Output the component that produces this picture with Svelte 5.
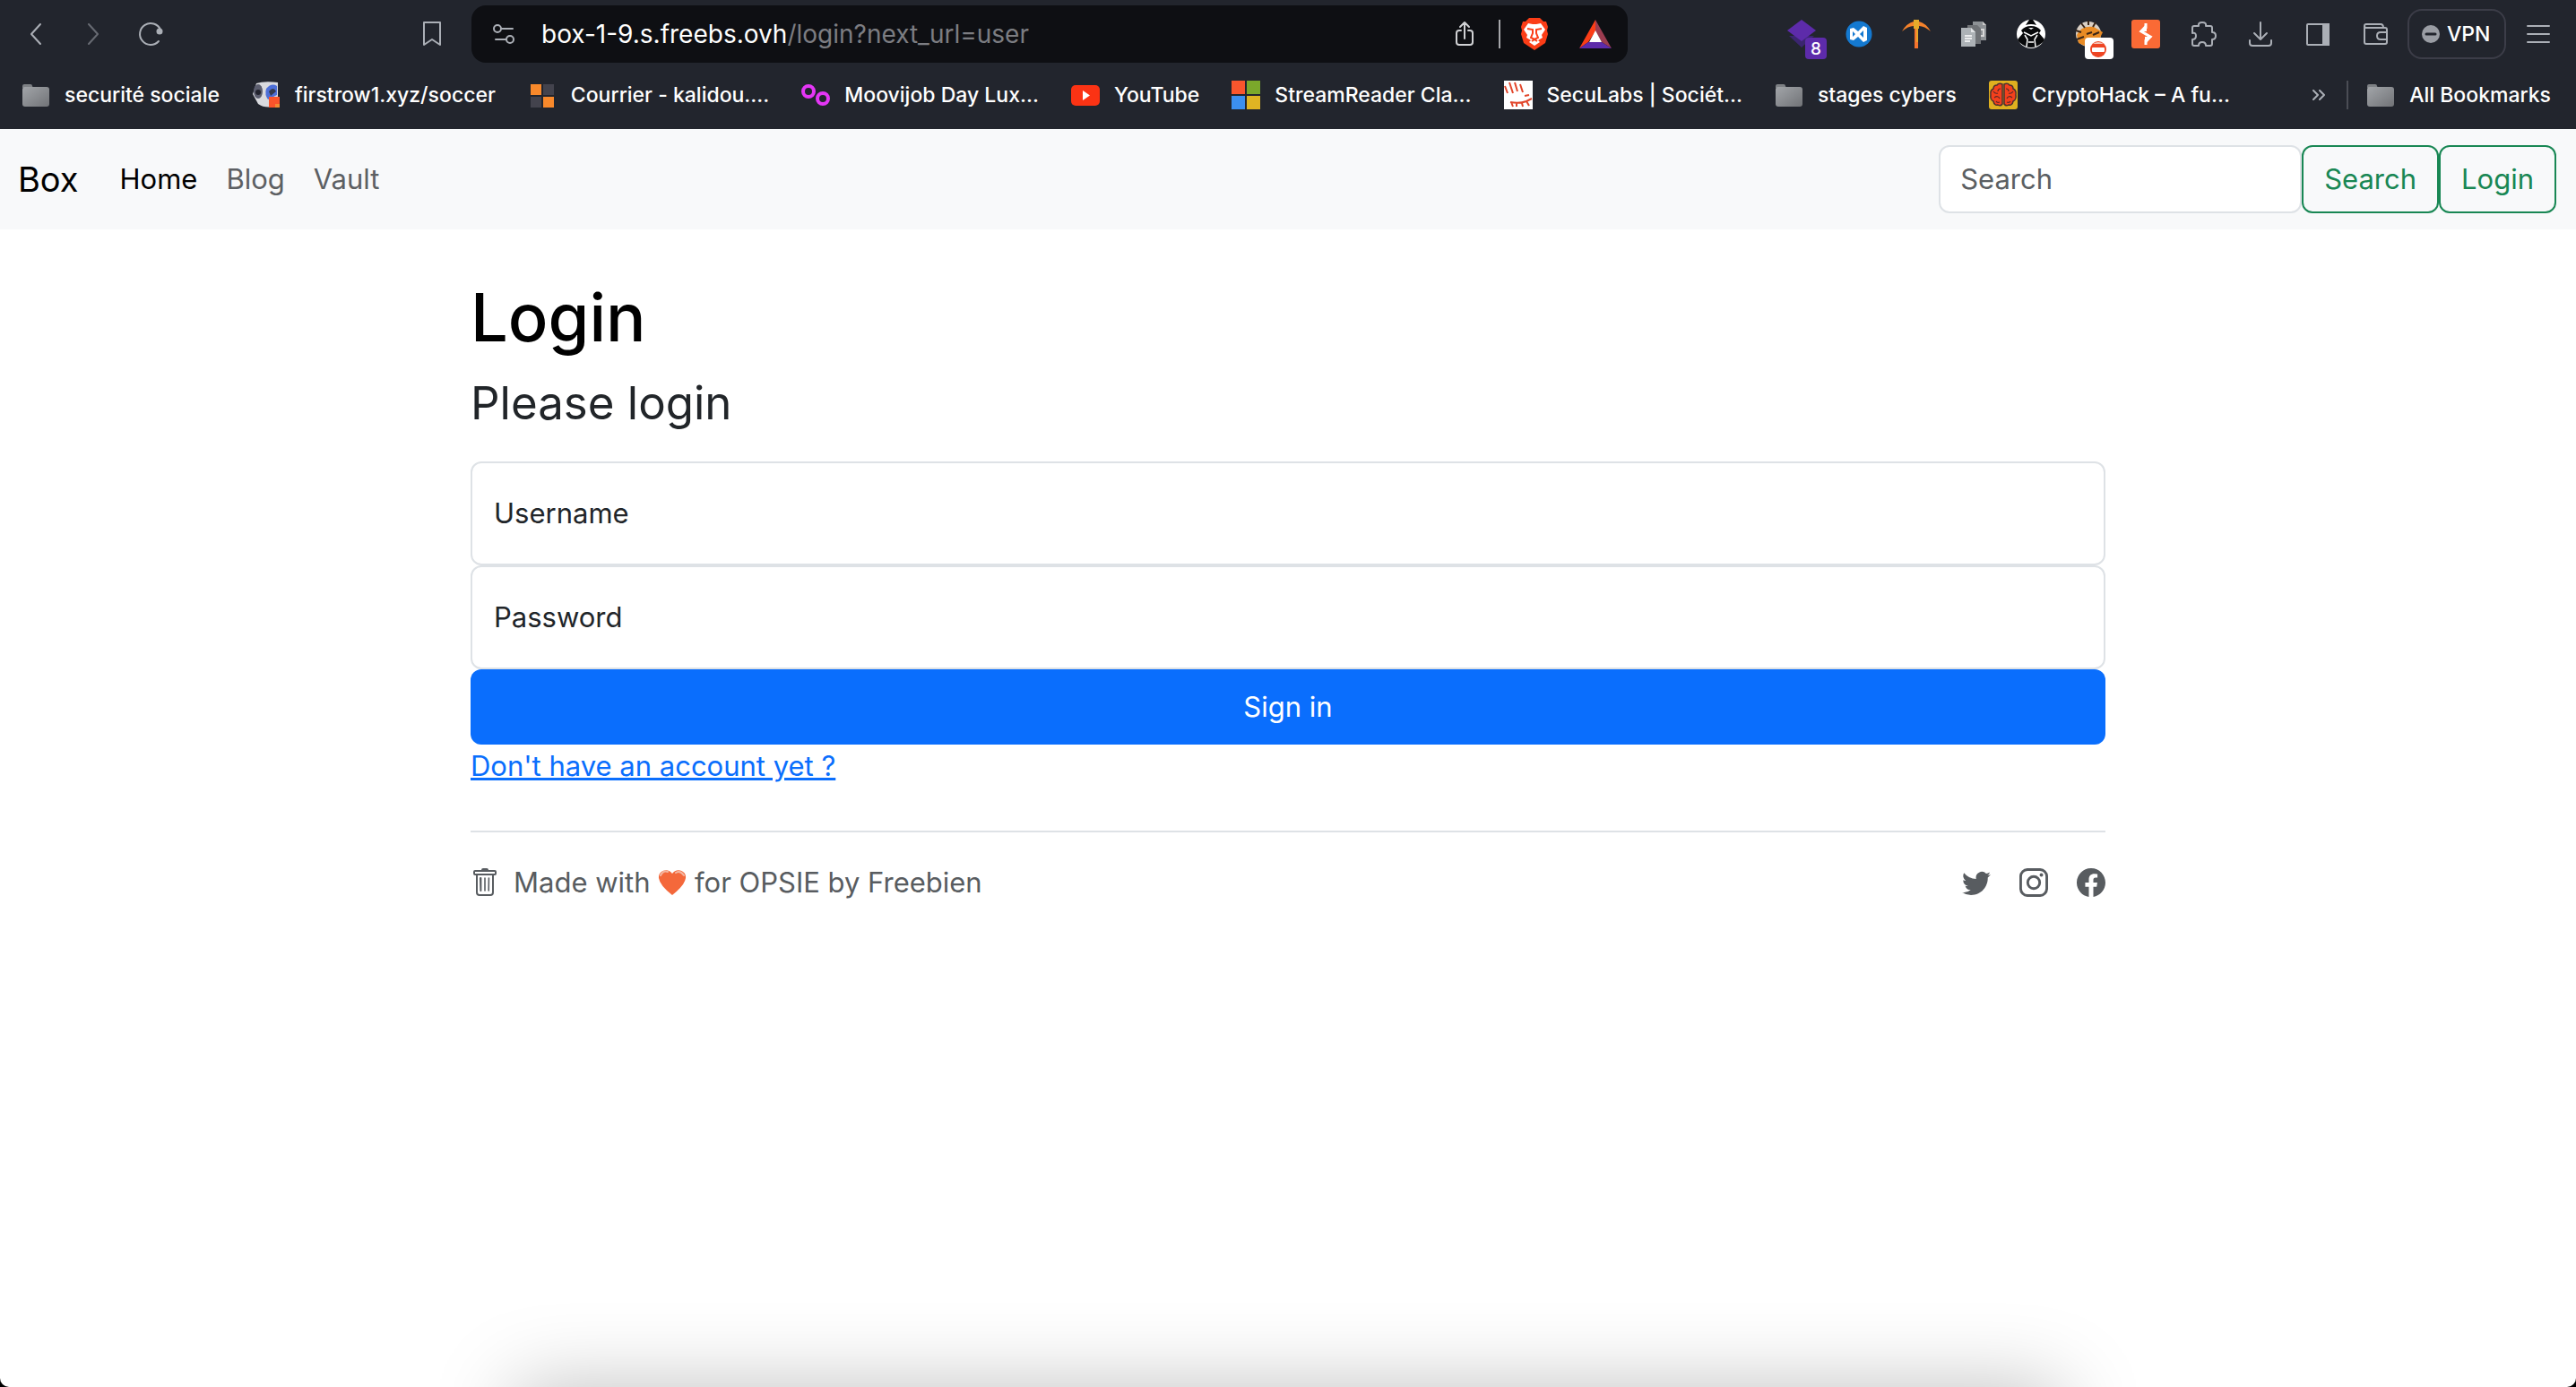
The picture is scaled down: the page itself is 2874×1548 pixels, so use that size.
<script>
  const bookmarks = [
    { icon: 'folder', label: 'securité sociale' },
    { icon: 'soccer', label: 'firstrow1.xyz/soccer' },
    { icon: 'courrier', label: 'Courrier - kalidou....' },
    { icon: 'moovi', label: 'Moovijob Day Lux...' },
    { icon: 'youtube', label: 'YouTube' },
    { icon: 'microsoft', label: 'StreamReader Cla...' },
    { icon: 'seculabs', label: 'SecuLabs | Sociét...' },
    { icon: 'folder', label: 'stages cybers' },
    { icon: 'crypto', label: 'CryptoHack – A fu...' }
  ];
  const extensions = [
    { icon: 'layers', label: 'Layers' },
    { icon: 'vscode', label: 'Code' },
    { icon: 'pickaxe', label: 'Pickaxe' },
    { icon: 'docs', label: 'Documents' },
    { icon: 'mask', label: 'Mask' },
    { icon: 'tiger', label: 'Tiger' },
    { icon: 'burp', label: 'Burp' },
    { icon: 'puzzle', label: 'Extensions' },
    { icon: 'download', label: 'Downloads' },
    { icon: 'sidebar', label: 'Sidebar' },
    { icon: 'wallet', label: 'Wallet' }
  ];
  let username = $state('');
  let password = $state('');
</script>

{#snippet icon(name)}
  <svg class="icon" viewBox="0 0 32 32" aria-hidden="true">
    {#if name === 'folder'}
      <defs><linearGradient id="fold" x1="0" y1="0" x2="1" y2="1"><stop offset="0" stop-color="#a2a5a9" /><stop offset="1" stop-color="#717377" /></linearGradient></defs>
      <path d="M1 8V6q0-2 2-2h7q2 0 2 2l1 2z" fill="#7d8084" />
      <rect x="1" y="7" width="30" height="22" rx="3" fill="url(#fold)" />
    {:else if name === 'soccer'}
      <path d="M5 3Q14 0 29 2v26Q15 32 7 26L1 15z" fill="#d9dade" />
      <ellipse cx="7" cy="12" rx="5" ry="8" fill="#5b5d6e" /><circle cx="7" cy="13" r="3" fill="#22232d" />
      <path d="M16 9Q22 2 28 6v10l-10 5q-4-5-2-12z" fill="#4d6fd8" /><path d="M19 12q5-6 8 0l-6 5z" fill="#333a4e" />
      <rect x="19" y="18" width="12" height="12" fill="#fb542b" /><path d="M26 26h5v4h-5z" fill="#f48b32" />
    {:else if name === 'courrier'}
      <path d="M3 4h12v12H3z" fill="#f8892b" /><path d="M17 4h12v12H17zM3 18h12v12H3z" fill="#43434d" /><path d="M17 18h12v12H17z" fill="#f8892b" />
    {:else if name === 'moovi'}
      <g fill="none" stroke="#e436f5" stroke-width="4"><circle cx="8" cy="12" r="6" /><circle cx="24" cy="20" r="6" /></g>
    {:else if name === 'youtube'}
      <rect y="5" width="32" height="23" rx="5" fill="#fb3314" /><path d="m13 11 8 5.500-8 5.500z" fill="#fff" />
    {:else if name === 'microsoft'}
      <path d="M0 0h15v15H0z" fill="#f9562d" /><path d="M17 0h15v15H17z" fill="#7ba82b" /><path d="M0 17h15v15H0z" fill="#3b8ff0" /><path d="M17 17h15v15H17z" fill="#dfb423" />
    {:else if name === 'seculabs'}
      <path d="M0 0h32v32H0z" fill="#fff" />
      <path d="M1 6l3 8M6 2l4 12M12 2l3 10M18 4l3 9M7 24q10 2 18-1l6-3M8 24l2 5M14 25v4M20 25l1 4M25 23l3 5M23 17l5-1" fill="none" stroke="#e2452a" stroke-width="2" />
    {:else if name === 'crypto'}
      <rect width="32" height="32" rx="3" fill="#dfb01f" />
      <path d="M15 4q-4-2-6 1-4 0-4 4-4 2-3 7-1 5 3 7 1 5 5 4 3 2 5-1zM17 4q4-2 6 1 4 0 4 4 4 2 3 7 1 5-3 7-1 5-5 4-3 2-5-1z" fill="#f4401c" stroke="#4a3030" stroke-width="1.500" />
      <path d="M13 9q-3 0-3 3M5 12q2 3 5 2M6 19q4-3 6 1M12 24q-3 1-4-1M19 9q3 0 3 3M27 12q-2 3-5 2M26 19q-4-3-6 1M20 24q3 1 4-1" fill="none" stroke="#5a2a28" stroke-width="1.200" />
    {:else if name === 'layers'}
      <path d="M2 18l14 13 14-13z" fill="#3b2570" /><path d="M16 0l16 12-16 12L0 12z" fill="#5d2baa" />
    {:else if name === 'vscode'}
      <circle cx="16" cy="16" r="14.500" fill="#1479d0" />
      <path d="M6 10l4-1 5 4 6-6 4 2v14l-4 2-6-6-5 4-4-1z" fill="#fff" /><path d="M9 13v6l3-3zM21 12v8l-4-4z" fill="#1479d0" />
    {:else if name === 'pickaxe'}
      <path d="M14 9h4v23h-4z" fill="#f4742e" /><path d="M16 9h2v16h-2z" fill="#e9a529" />
      <path d="M0 13Q5 4 13 2V0h6v2q8 2 13 11Q25 7 19 7v3h-6V7Q7 7 0 13z" fill="#f5822b" /><path d="M13 0h6v10h-6z" fill="#e5ab2b" />
    {:else if name === 'docs'}
      <path d="M15 2h11l4 4v17H15z" fill="#8d9195" /><path d="M26 2v4h4z" fill="#ccc" /><path d="M24 11h3v7h-4" fill="none" stroke="#d8d8d8" stroke-width="2" />
      <path d="M9 6h11l4 4v17H9z" fill="#6f7276" /><path d="M2 9h11l5 5v16H2z" fill="#adb2b6" /><path d="M13 9v5h5z" fill="#e3e5e7" />
      <path d="M6 18h8M6 21h8M6 24h6" stroke="#fff" stroke-width="1.500" />
    {:else if name === 'mask'}
      <circle cx="16" cy="16" r="16" fill="#fff" />
      <path d="M14 0h4l4 6q-6-2-12 0z" fill="#08090b" />
      <path d="M16 7q7 0 11 5l-2 3 6 7q-1 3-3 4-12 10-24 0-2-1-3-4l6-7-2-3q4-5 11-5z" fill="#08090b" />
      <path d="M13 9h6l-3 2z" fill="#fff" />
      <path d="M8 14l8 4 8-4M9 17l3 5-1 8M23 17l-3 5 1 8M13 25h6" fill="none" stroke="#fff" stroke-width="1.500" />
    {:else if name === 'tiger'}
      <circle cx="16" cy="16" r="14" fill="#d9cfc4" /><path d="M3 17Q8 6 22 8l10 6-4 8-14 8-9-4z" fill="#e88b25" />
      <path d="M8 4l4 5M16 1v5M24 3l-3 5M2 12l6 2M3 22l8-3M14 16l6-2M21 17l7-3" stroke="#3a2618" stroke-width="2" />
    {:else if name === 'burp'}
      <rect width="32" height="32" rx="3" fill="#fa6a35" /><path d="M17 4v9H9zM15 28v-9h8z" fill="#fff" /><path d="M16 4v5l-5 4 10 6-5 4v5" fill="none" stroke="#fff" stroke-width="3" />
    {:else if name === 'puzzle'}
      <path class="line" d="M4 9q0-2 2-2h5q-1-4 4-4t4 4h5q2 0 2 2v5q4 0 4 4t-4 4v5q0 2-2 2h-5q0-4-4-4t-4 4H6q-2 0-2-2v-5q4 0 4-4t-4-3z" />
    {:else if name === 'download'}
      <path class="line" d="M16 3v18M9 15l7 7 7-7M4 23v3q0 3 3 3h18q3 0 3-3v-3" />
    {:else if name === 'sidebar'}
      <rect class="line" x="4" y="5" width="24" height="23" rx="1" /><path d="M21 4h8v25h-8z" fill="#abafb6" />
    {:else if name === 'wallet'}
      <path class="line" d="M4 7v18q0 2 2 2h21q2 0 2-2V11q0-2-2-2H6q-2 0-2-2t2-2h16q3 0 3 4M29 14h-7q-4 0-4 4t4 4h7" />
    {/if}
  </svg>
{/snippet}

<div class="window">
  <header class="browser">
    <div class="toolbar">
      <button class="tool" aria-label="Back"><svg class="icon" viewBox="0 0 32 32"><path class="line" d="M21 5 11 16l10 11" /></svg></button>
      <button class="tool dim" aria-label="Forward"><svg class="icon" viewBox="0 0 32 32"><path class="line" d="M11 5l10 11-10 11" /></svg></button>
      <button class="tool" aria-label="Reload"><svg class="icon" viewBox="0 0 32 32"><path class="line" d="M25 24A12 12 0 1 1 27 11" /><circle cx="26" cy="13" r="3.500" fill="#abafb6" /></svg></button>
      <button class="tool bookmark" aria-label="Bookmark this page"><svg class="icon" viewBox="0 0 32 32"><path class="line" d="M7 3h18v25l-9-6-9 6z" /></svg></button>
      <div class="address">
        <button class="tool" aria-label="Site settings"><svg class="icon" viewBox="0 0 32 32"><g class="line"><circle cx="9" cy="10" r="4" /><path d="M13 10h13M7 22h12" /><circle cx="23" cy="22" r="4" /></g></svg></button>
        <div class="url">box-1-9.s.freebs.ovh<span>/login?next_url=user</span></div>
        <button class="tool" aria-label="Share"><svg class="icon" viewBox="0 0 32 32"><path class="line bright" d="M12 12h-2q-3 0-3 3v10q0 3 3 3h12q3 0 3-3V15q0-3-3-3h-2M16 21V3M11 8l5-5 5 5" /></svg></button>
        <i class="rule"></i>
        <button class="tool brave" aria-label="Brave Shields">
          <svg class="shield" viewBox="0 0 32 36"><path d="M10 0h12l4 4h3l2 6-1 4 1 4-3 10-12 8-12-8L1 18l1-4-1-4 2-6h3z" fill="#fb3d17" /><path d="M9 6l5 1h4l5-1 5 7-4 6 1 3-5 3 2 2-6 4-6-4 2-2-5-3 1-3-4-6z" fill="#fff" /><path d="M8 12l6 1v4l-2 5 4 2 4-2-2-5v-4l6-1M13 26l3-2 3 2" fill="none" stroke="#fb3d17" stroke-width="2" /></svg>
        </button>
        <button class="tool" aria-label="Rewards"><svg class="rewards" viewBox="0 0 36 32"><path d="M18 0v13l-8 12-10 7z" fill="#fb3d17" /><path d="M18 0l18 32-11-7-7-12z" fill="#9b3c50" /><path d="M0 32l10-7h15l11 7z" fill="#5d2baa" /><path d="M18 12l7 13H11z" fill="#fff" /></svg></button>
      </div>
      <div class="extensions">
        {#each extensions as ext}
          <button class="tool" aria-label={ext.label}>
            {@render icon(ext.icon)}
            {#if ext.icon === 'layers'}<span class="badge count">8</span>{/if}
            {#if ext.icon === 'tiger'}
              <span class="badge blocked"><svg viewBox="0 0 32 24"><circle cx="15" cy="13" r="9" fill="#ee4523" /><path d="M9 7q6-4 12 0z" fill="#f4c5b8" /><rect x="8" y="11" width="14" height="5" rx="1" fill="#fff" /></svg></span>
            {/if}
          </button>
        {/each}
      </div>
      <button class="vpn"><svg viewBox="0 0 20 20" aria-hidden="true"><circle cx="10" cy="10" r="10" fill="#9a9da4" /><path d="M5 10h10" stroke="#22252d" stroke-width="3" stroke-linecap="round" /></svg>VPN</button>
      <button class="tool" aria-label="Menu"><svg class="icon" viewBox="0 0 32 32"><path class="line" d="M4 7h24M4 16h24M4 25h24" /></svg></button>
    </div>
    <nav class="bookmarks" aria-label="Bookmarks">
      {#each bookmarks as mark}
        <a href="#bookmark">{@render icon(mark.icon)}{mark.label}</a>
      {/each}
      <button class="more" aria-label="More bookmarks"><svg viewBox="0 0 14 12"><path class="line" d="M1 1l5 5-5 5M8 1l5 5-5 5" /></svg></button>
      <i class="rule faint"></i>
      <a href="#all">{@render icon('folder')}All Bookmarks</a>
    </nav>
  </header>

  <nav class="navbar" aria-label="Main">
    <a class="brand" href="#box">Box</a>
    <div class="links">
      <a class="active" href="#home">Home</a>
      <a href="#blog">Blog</a>
      <a href="#vault">Vault</a>
    </div>
    <form class="search">
      <input type="search" placeholder="Search" aria-label="Search" />
      <button type="submit">Search</button>
      <button type="button">Login</button>
    </form>
  </nav>

  <main>
    <h1>Login</h1>
    <h2>Please login</h2>
    <form class="login">
      <div class="field"><input id="username" type="text" bind:value={username} /><label for="username">Username</label></div>
      <div class="field"><input id="password" type="password" bind:value={password} /><label for="password">Password</label></div>
      <button type="submit">Sign in</button>
    </form>
    <a class="signup" href="#register">Don't have an account yet ?</a>
    <footer>
      <a href="#trash" aria-label="Home"><svg viewBox="0 0 16 16"><path fill="currentColor" d="M5 5.500a.5.5 0 0 1 .5-.5h.2a.5.5 0 0 1 .5.5v7a.5.5 0 0 1-1 0zM7.600 5.500a.4.4 0 0 1 .8 0v7a.4.4 0 0 1-.8 0zM9.800 5.500a.4.400 0 0 1 .8 0l-.1 7a.4.400 0 0 1-.8 0z" /><path fill="currentColor" fill-rule="evenodd" d="M14.500 3a1 1 0 0 1-1 1H13v9.500a2 2 0 0 1-2 2H5a2 2 0 0 1-2-2V4h-.5a1 1 0 0 1-1-1V2a1 1 0 0 1 1-1H6a1 1 0 0 1 1-1h2a1 1 0 0 1 1 1h3.500a1 1 0 0 1 1 1zM4 4v9.500a1 1 0 0 0 1 1h6a1 1 0 0 0 1-1V4zM2.500 3h11V2h-11z" /></svg></a>
      <p>Made with <svg class="heart" viewBox="0 0 32 30" role="img" aria-label="love"><path d="M16 29Q2 18 1 10C0 1 12-2 16 5 20-2 32 1 31 10Q30 18 16 29z" fill="#f4683b" /><path d="M3 7q3-6 8-4M20 4q5-3 9 3" fill="none" stroke="#f3b7a2" stroke-width="2" stroke-linecap="round" /></svg> for OPSIE by Freebien</p>
      <div class="social">
        <a href="#twitter" aria-label="Twitter"><svg viewBox="0 0 16 16"><path fill="currentColor" d="M5.026 15c6.038 0 9.341-5.003 9.341-9.334 0-.14 0-.282-.006-.422A6.685 6.685 0 0 0 16 3.542a6.658 6.658 0 0 1-1.889.518 3.301 3.301 0 0 0 1.447-1.817 6.533 6.533 0 0 1-2.087.793A3.286 3.286 0 0 0 7.875 6.030a9.325 9.325 0 0 1-6.767-3.429 3.289 3.289 0 0 0 1.018 4.382A3.323 3.323 0 0 1 .64 6.575v.045a3.288 3.288 0 0 0 2.632 3.218 3.203 3.203 0 0 1-.865.115 3.230 3.230 0 0 1-.614-.057 3.283 3.283 0 0 0 3.067 2.277A6.588 6.588 0 0 1 .78 13.580a6.320 6.320 0 0 1-.78-.045A9.344 9.344 0 0 0 5.026 15z" /></svg></a>
        <a href="#instagram" aria-label="Instagram"><svg viewBox="0 0 16 16"><g fill="none" stroke="currentColor" stroke-width="1.450"><rect x=".72" y=".72" width="14.560" height="14.560" rx="3.900" /><circle cx="8" cy="8" r="3.350" /></g><circle cx="12.270" cy="3.730" r=".96" fill="currentColor" /></svg></a>
        <a href="#facebook" aria-label="Facebook"><svg viewBox="0 0 16 16"><path fill="currentColor" d="M16 8.049c0-4.446-3.582-8.050-8-8.050C3.580 0-.002 3.603-.002 8.050c0 4.017 2.926 7.347 6.750 7.951v-5.625h-2.030V8.050H6.750V6.275c0-2.017 1.195-3.131 3.022-3.131.876 0 1.791.157 1.791.157v1.980h-1.009c-.993 0-1.303.621-1.303 1.258v1.510h2.218l-.354 2.326H9.250V16c3.824-.604 6.750-3.934 6.750-7.951z" /></svg></a>
      </div>
    </footer>
  </main>
  <div class="shadow"><div></div></div>
</div>

<style>
  :global(body) { background: #000; }
  * { box-sizing: border-box; }
  .window {
    position: relative; min-height: 100vh; overflow: hidden; background: #fff; border-radius: 0 0 10px 10px;
    font-family: Inter, "Liberation Sans", sans-serif; font-size: 31px; line-height: 48px; color: #212529;
  }
  a { color: inherit; text-decoration: none; }
  button { font: inherit; color: inherit; background: none; border: 0; padding: 0; }
  svg { display: block; }
  .icon { width: 32px; height: 32px; }
  .line { fill: none; stroke: #abafb6; stroke-width: 2; stroke-linecap: round; stroke-linejoin: round; }
  .bright { stroke: #d0d1d4; }
  .dim { opacity: .5; }

  .browser { height: 144px; background: #22252d; color: #fff; font-size: 24px; font-weight: 500; line-height: 32px; }
  .toolbar { display: flex; align-items: center; height: 76px; padding: 0 26px 0 24px; }
  .tool { position: relative; flex: none; margin-right: 32px; }
  .bookmark { margin: 0 28px 0 250px; }
  .address { flex: 0 1 1290px; display: flex; align-items: center; height: 64px; padding: 0 18px 0 20px; border-radius: 16px; background: #0e0f13; }
  .address .tool { margin: 0; }
  .url { flex: 1; padding-left: 26px; font-size: 28px; font-weight: 400; white-space: nowrap; }
  .url span { color: #7c7d82; }
  .rule { flex: none; width: 2px; height: 32px; margin: 0 22px; background: #a5a6aa; }
  .shield { width: 32px; height: 36px; }
  .address .brave { margin-right: 34px; }
  .rewards { width: 36px; height: 32px; }
  .extensions { display: flex; gap: 32px; margin: 0 20px 0 auto; }
  .extensions .tool { margin: 0; }
  .badge { position: absolute; top: 20px; height: 24px; border-radius: 4px; }
  .count { left: 20px; width: 24px; background: #5d2baa; font-size: 19px; line-height: 26px; text-align: center; }
  .blocked { left: 12px; width: 32px; background: #fff; }
  .vpn { display: flex; align-items: center; gap: 8px; height: 56px; width: 110px; padding: 0 14px; margin-right: 20px; border: 2px solid #3c3d48; border-radius: 16px; font-size: 23px; }
  .vpn svg { width: 20px; height: 20px; flex: none; }
  .toolbar > .tool:last-child { margin-right: 0; }

  .bookmarks { display: flex; align-items: center; gap: 36px; height: 60px; padding: 0 28px 0 24px; font-size: 23px; white-space: nowrap; }
  .bookmarks a { display: flex; align-items: center; gap: 16px; }
  .more { margin-left: auto; }
  .more svg { width: 14px; height: 12px; }
  .bookmarks .rule { margin: 0 -16px 0 -12px; }
  .faint { background: #4b4d55; }

  .navbar { display: flex; align-items: center; padding: 18px 22px 18px 20px; background: #f8f9fa; line-height: 48px; }
  .brand { margin-right: 46px; font-size: 38px; color: #000; }
  .links { display: flex; gap: 32px; color: #5d6063; }
  .links .active { color: #000; }
  .search { display: flex; margin-left: auto; }
  .search input { width: 405px; padding: 0 22px; border: 2px solid #dee2e6; border-radius: 12px; background: #fff; font: inherit; }
  .search input::placeholder { color: #5b5f63; opacity: 1; }
  .search button { padding: 12px 23px; border: 2px solid #198754; border-radius: 12px; color: #198754; }

  main { width: 1824px; max-width: 100%; margin: 0 auto; padding-top: 50px; }
  h1 { margin: 0 0 14px; font-size: 74px; line-height: 96px; font-weight: 500; color: #000; }
  h2 { margin: 0 0 32px; font-size: 51px; line-height: 67px; font-weight: 400; }
  .login { display: flex; flex-direction: column; }
  .field { display: grid; height: 116px; }
  .field input, .field label { grid-area: 1 / 1; }
  .field input { width: 100%; padding: 0 24px; border: 2px solid #dee2e6; border-radius: 12px; font: inherit; background: #fff; }
  .field label { align-self: center; justify-self: start; padding-left: 26px; }
  .login button { height: 84px; border-radius: 12px; background: #0a6efd; color: #fff; }
  .signup { color: #0a6efd; text-decoration: underline; }
  footer { display: flex; align-items: center; margin-top: 48px; padding-top: 32px; border-top: 2px solid #dee2e6; color: #585c60; }
  footer a svg { width: 32px; height: 32px; }
  footer p { margin: 0 auto 0 16px; }
  .heart { display: inline-block; width: 32px; height: 30px; vertical-align: -4px; }
  .social { display: flex; gap: 32px; }

  .shadow { position: absolute; left: 0; right: 0; bottom: 0; height: 140px; overflow: hidden; pointer-events: none; }
  .shadow div { height: 100px; margin: 140px 20% 0; box-shadow: 0 0 90px rgba(0, 0, 0, .25); }
</style>
